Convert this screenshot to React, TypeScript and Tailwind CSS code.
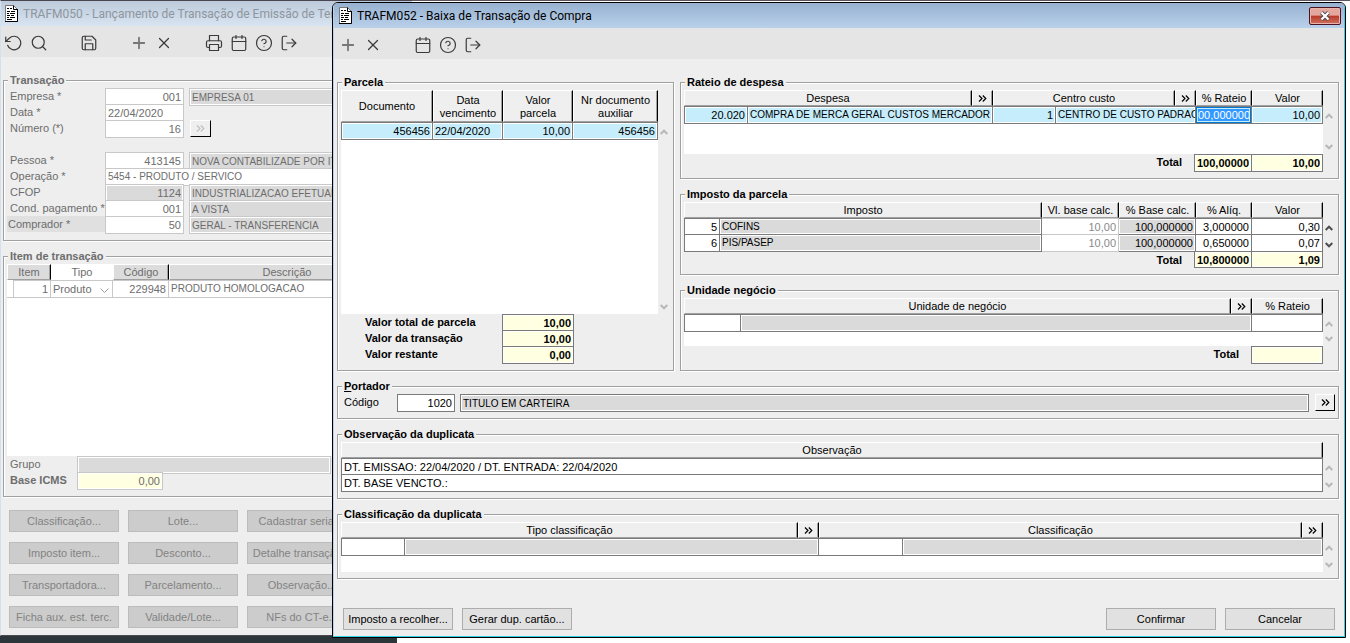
import type { ReactNode } from 'react'
import clsx from 'clsx'
import type { IconType } from 'react-icons'
import {
  FiCalendar,
  FiHelpCircle,
  FiLogOut,
  FiPlus,
  FiPrinter,
  FiRotateCcw,
  FiSave,
  FiSearch,
  FiX,
} from 'react-icons/fi'

type Tool = { label: string; icon: IconType; muted?: boolean } | null

// null leaves an empty slot between groups
const backTools: Tool[] = [
  { label: 'Desfazer', icon: FiRotateCcw },
  { label: 'Pesquisar', icon: FiSearch },
  null,
  { label: 'Salvar', icon: FiSave },
  null,
  { label: 'Incluir', icon: FiPlus, muted: true },
  { label: 'Excluir', icon: FiX },
  null,
  { label: 'Imprimir', icon: FiPrinter },
  { label: 'Calendário', icon: FiCalendar },
  { label: 'Ajuda', icon: FiHelpCircle },
  { label: 'Sair', icon: FiLogOut },
]

const frontTools: Tool[] = [
  { label: 'Incluir', icon: FiPlus, muted: true },
  { label: 'Excluir', icon: FiX },
  null,
  { label: 'Calendário', icon: FiCalendar },
  { label: 'Ajuda', icon: FiHelpCircle },
  { label: 'Sair', icon: FiLogOut },
]

const backActions = [
  'Classificação...',
  'Lote...',
  'Cadastrar serial...',
  'Imposto item...',
  'Desconto...',
  'Detalhe transação...',
  'Transportadora...',
  'Parcelamento...',
  'Observação...',
  'Ficha aux. est. terc.',
  'Validade/Lote...',
  'NFs do CT-e...',
]

const impostos = [
  { id: '5', nome: 'COFINS', base: '10,00', perc: '100,000000', aliq: '3,000000', valor: '0,30' },
  { id: '6', nome: 'PIS/PASEP', base: '10,00', perc: '100,000000', aliq: '0,650000', valor: '0,07' },
]

function DocIcon() {
  return (
    <svg width="13" height="17" viewBox="0 0 13 17" className="shrink-0">
      <path d="M.5.5h8l4 4v12H.5z" fill="#fff" stroke="#777" />
      <path d="M8.5.5v4h4M12.5 4v12.5H0" fill="none" stroke="#000" />
      <path
        d="M2 3.5h2M5 3.5h2M2 6.5h3M6 6.5h4M2 8.5h2M5 8.5h5M2 10.5h3M6 10.5h3M2 12.5h2M5 12.5h5M2 14.5h5"
        stroke="#000"
        strokeWidth="1"
      />
    </svg>
  )
}

function DoubleArrow() {
  return (
    <svg width="9" height="7" viewBox="0 0 9 7" fill="none" stroke="currentColor" strokeWidth="1.2">
      <path d="M1 .5l3 3-3 3M4.8 .5l3 3-3 3" />
    </svg>
  )
}

function LovButton({ label }: { label: string }) {
  return (
    <button type="button" aria-label={label} className="flex w-full items-center justify-center">
      <DoubleArrow />
    </button>
  )
}

function TitleBar({ title, active }: { title: string; active?: boolean }) {
  return (
    <div
      className={clsx(
        'flex h-[25px] items-center gap-[5px] pr-[3px] font-[Roboto,sans-serif] text-[12px] leading-4',
        active
          ? 'bg-linear-to-b from-[#97b1d0] to-[#b9d1ea] pl-[5px] text-black'
          : 'bg-linear-to-b from-[#bccadb] to-[#d8e4f1] pl-1 text-[#8e959d]',
      )}
    >
      <DocIcon />
      <h1 className="flex-1 overflow-hidden whitespace-nowrap">{title}</h1>
      {active ? (
        <button
          type="button"
          aria-label="Fechar"
          className="flex h-[18px] w-8 items-center justify-center rounded-xs border border-[#4c1420] bg-linear-to-b from-[#e4a79d] from-45% via-[#b8392a] via-50% to-[#d0705c] shadow-[inset_0_0_0_1px_#e8b3aa]"
        >
          <svg width="12" height="10" viewBox="0 0 12 10">
            <path d="M2.5 1.5l7 7M9.5 1.5l-7 7" stroke="#4a4a55" strokeWidth="4" />
            <path d="M2.5 1.5l7 7M9.5 1.5l-7 7" stroke="#fff" strokeWidth="2.2" />
          </svg>
        </button>
      ) : null}
    </div>
  )
}

function Toolbar({ tools, className }: { tools: Tool[]; className?: string }) {
  return (
    <div className={clsx('flex h-[31px] items-center bg-[#e5e5e5] pt-0.5', className)}>
      {tools.map((t, i) =>
        t ? (
          <button
            key={t.label}
            type="button"
            aria-label={t.label}
            className={clsx(
              'flex w-[25px] justify-center',
              t.muted ? 'text-[#777777]' : 'text-[#3a3a3a]',
            )}
          >
            <t.icon size={18} strokeWidth={t.muted ? 2.4 : 1.6} />
          </button>
        ) : (
          <span key={i} className="w-[25px]" />
        ),
      )}
    </div>
  )
}

function Group({
  title,
  className,
  children,
}: {
  title: ReactNode
  className?: string
  children: ReactNode
}) {
  return (
    <fieldset
      className={clsx(
        'min-w-0 border border-[#a0a0a0] px-[3px] pb-1.5 shadow-[inset_1px_1px_0_#fff,1px_1px_0_#fff]',
        className,
      )}
    >
      <legend className="ml-px bg-[#eeeeee] px-0.5 font-bold leading-4">{title}</legend>
      {children}
    </fieldset>
  )
}

function Th({
  span,
  className,
  children,
}: {
  span?: number
  className?: string
  children?: ReactNode
}) {
  return (
    <th
      colSpan={span}
      className={clsx(
        'overflow-hidden border border-t-white border-r-black border-b-[#a0a0a0] border-l-white p-0 pt-px leading-[13px] font-normal whitespace-nowrap',
        className ?? 'bg-[#efefef] shadow-[inset_-1px_0_0_#a0a0a0]',
      )}
    >
      {children}
    </th>
  )
}

function Td({
  span,
  className,
  children,
}: {
  span?: number
  className?: string
  children?: ReactNode
}) {
  return (
    <td
      colSpan={span}
      className={clsx(
        'overflow-hidden border-t border-r p-0 px-0.5 leading-[14px] whitespace-nowrap',
        className,
      )}
    >
      {children}
    </td>
  )
}

const rowClass = 'h-4 *:border-[#7a7a7a] *:first:border-l last:h-[18px] last:*:border-b'
const selectedCell = 'bg-[#c6edfc] shadow-[inset_0_0_0_1px_#fff]'
const grayCell = 'bg-[#dadada] shadow-[inset_0_0_0_1px_#fff]'
const cellInput = 'block h-[14px] w-full bg-transparent outline-none'

function Scroller({ tall, active }: { tall?: boolean; active?: boolean }) {
  const color = active ? 'text-[#505050]' : 'text-[#b8b8b8]'
  const button = 'flex h-[15px] w-3 items-center justify-center'
  return (
    <div
      className={clsx(
        'flex w-3 shrink-0 flex-col justify-between',
        tall ? 'pt-[34px]' : 'pt-[18px]',
        color,
      )}
    >
      <button type="button" aria-label="Rolar para cima" className={button}>
        <svg width="8" height="6" viewBox="0 0 8 6" fill="none" stroke="currentColor" strokeWidth="2">
          <path d="M.7 5L4 1.7 7.3 5" />
        </svg>
      </button>
      <button type="button" aria-label="Rolar para baixo" className={button}>
        <svg width="8" height="6" viewBox="0 0 8 6" fill="none" stroke="currentColor" strokeWidth="2">
          <path d="M.7 1L4 4.3 7.3 1" />
        </svg>
      </button>
    </div>
  )
}

function Grid({
  height,
  cols,
  head,
  tall,
  scrollActive,
  noScroll,
  children,
}: {
  height: string
  cols: string[]
  head: ReactNode
  tall?: boolean
  scrollActive?: boolean
  noScroll?: boolean
  children: ReactNode
}) {
  return (
    <div className={clsx('flex', height)}>
      <div className="min-w-0 flex-1 bg-white">
        <table className="w-full table-fixed border-separate border-spacing-0">
          <colgroup>
            {cols.map((c, i) => (
              <col key={i} className={c} />
            ))}
          </colgroup>
          <thead>
            <tr className={tall ? 'h-8' : 'h-4'}>{head}</tr>
          </thead>
          <tbody>{children}</tbody>
        </table>
      </div>
      {noScroll ? null : <Scroller tall={tall} active={scrollActive} />}
    </div>
  )
}

const totalInput =
  'border border-[#7a7a7a] bg-[#ffffe1] px-0.5 font-bold shadow-[inset_0_0_0_1px_#fff] outline-none'

// label, code box and optional description of the background form
function FieldRow({
  id,
  label,
  code,
  desc,
  align = 'text-right',
  disabled,
  highlight,
  extra,
}: {
  id: string
  label: string
  code: string
  desc?: string
  align?: string
  disabled?: boolean
  highlight?: boolean
  extra?: ReactNode
}) {
  return (
    <div className="flex h-4">
      <label
        htmlFor={id}
        className={clsx('w-[98px] shrink-0 leading-4', highlight ? 'bg-[#e0e0e0] pl-px' : 'pl-[3px]')}
      >
        {label}
      </label>
      <input
        id={id}
        defaultValue={code}
        disabled={disabled}
        className={clsx(
          'h-[18px] w-[79px] shrink-0 border border-[#c8c8c8] px-0.5',
          disabled ? grayCell : 'bg-white',
          align,
        )}
      />
      {desc ? (
        <input
          aria-label={`${label} descrição`}
          readOnly
          defaultValue={desc}
          className={clsx(
            'ml-[5px] h-[18px] min-w-0 flex-1 border border-[#c8c8c8] px-0.5 text-[10px]',
            grayCell,
          )}
        />
      ) : null}
      {extra}
    </div>
  )
}

function TransactionWindow() {
  const head = 'bg-[#dcdcdc] shadow-[inset_-1px_0_0_#a0a0a0]'
  return (
    <section className="absolute top-0 left-0 w-[412px] border-t border-b border-l border-t-[#4a4650] border-b-[#4a4a50] border-l-[#d3e0ef] bg-[#eeeeee] text-[#6d6d6d]">
      <TitleBar title="TRAFM050 - Lançamento de Transação de Emissão de Terceiros" />
      <Toolbar tools={backTools} />
      <div className="flex flex-col gap-[7px] pt-[15px] pr-[3px] pl-0.5">
        <Group title="Transação">
          <div className="pb-0.5">
            <FieldRow id="empresa" label="Empresa *" code="001" desc="EMPRESA 01" />
            <FieldRow id="data" label="Data *" code="22/04/2020" align="text-left" />
            <FieldRow
              id="numero"
              label="Número (*)"
              code="16"
              extra={
                <button
                  type="button"
                  disabled
                  aria-label="Buscar número"
                  className="ml-1.5 flex h-[17px] w-[21px] items-center justify-center border border-t-white border-r-black border-b-black border-l-white bg-[#efefef] text-[#c0c0c0]"
                >
                  <DoubleArrow />
                </button>
              }
            />
            <div className="h-4" />
            <FieldRow
              id="pessoa"
              label="Pessoa *"
              code="413145"
              desc="NOVA CONTABILIZADE POR ITEM"
            />
            <div className="flex h-4">
              <label htmlFor="operacao" className="w-[98px] shrink-0 pl-[3px] leading-4">
                Operação *
              </label>
              <select
                id="operacao"
                className="h-[18px] min-w-0 flex-1 appearance-none border border-[#c8c8c8] bg-white px-0.5 text-[10px]"
              >
                <option>5454 - PRODUTO / SERVICO</option>
              </select>
            </div>
            <FieldRow id="cfop" label="CFOP" code="1124" desc="INDUSTRIALIZACAO EFETUADA" disabled />
            <FieldRow id="cond" label="Cond. pagamento *" code="001" desc="A VISTA" />
            <FieldRow
              id="comprador"
              label="Comprador *"
              code="50"
              desc="GERAL - TRANSFERENCIA"
              highlight
            />
          </div>
        </Group>

        <Group title="Item de transação">
          <Grid
            height="h-48"
            noScroll
            cols={['w-[7px]', 'w-[37px]', 'w-[62px]', 'w-14', '']}
            head={
              <>
                <Th span={2} className={head}>
                  Item
                </Th>
                <Th className="border-white! bg-white">Tipo</Th>
                <Th className={head}>Código</Th>
                <Th className={head}>Descrição</Th>
              </>
            }
          >
            <tr className="h-[18px] *:border-b *:border-[#c8c8c8]">
              <td className="border-r p-0" />
              <Td className="text-right">1</Td>
              <Td>
                <div className="relative">
                  <select
                    aria-label="Tipo"
                    className="block h-[14px] w-full appearance-none bg-transparent leading-[14px]"
                  >
                    <option>Produto</option>
                  </select>
                  <svg
                    width="9"
                    height="5"
                    viewBox="0 0 9 5"
                    fill="none"
                    stroke="#a0a0a0"
                    className="pointer-events-none absolute top-1.5 right-px"
                  >
                    <path d="M.5.5l4 4 4-4" />
                  </svg>
                </div>
              </Td>
              <Td className="text-right">229948</Td>
              <Td className="text-[10px]">PRODUTO HOMOLOGACAO</Td>
            </tr>
          </Grid>
          <div className="pb-0.5">
            <div className="flex h-4">
              <label htmlFor="grupo" className="w-[70px] pl-[3px] leading-4">
                Grupo
              </label>
              <input
                id="grupo"
                disabled
                className={clsx('h-[18px] w-[254px] border border-[#c8c8c8]', grayCell)}
              />
            </div>
            <div className="flex h-4">
              <label htmlFor="icms" className="w-[70px] pl-[3px] leading-4 font-bold">
                Base ICMS
              </label>
              <input
                id="icms"
                readOnly
                defaultValue="0,00"
                className="h-[18px] w-[86px] border border-[#c8c8c8] bg-[#ffffe1] px-0.5 text-right shadow-[inset_0_0_0_1px_#fff]"
              />
            </div>
          </div>
        </Group>
      </div>

      <div className="grid grid-cols-[repeat(3,110px)] gap-x-[9px] gap-y-2.5 pt-[13px] pb-[7px] pl-2">
        {backActions.map((label) => (
          <button
            key={label}
            type="button"
            disabled
            className="h-[22px] border border-[#bcbcbc] bg-[#cccccc] whitespace-nowrap text-[#838383]"
          >
            {label}
          </button>
        ))}
      </div>
    </section>
  )
}

function ParcelaGroup() {
  const totals = [
    { id: 'total-parcela', label: 'Valor total de parcela', value: '10,00' },
    { id: 'total-transacao', label: 'Valor da transação', value: '10,00' },
    { id: 'restante', label: 'Valor restante', value: '0,00' },
  ]
  return (
    <Group title="Parcela" className="w-[337px] shrink-0">
      <Grid
        height="h-56"
        tall
        cols={['', 'w-[70px]', 'w-[70px]', 'w-[85px]']}
        head={
          <>
            <Th>Documento</Th>
            <Th>
              Data
              <br />
              vencimento
            </Th>
            <Th>
              Valor
              <br />
              parcela
            </Th>
            <Th>
              Nr documento
              <br />
              auxiliar
            </Th>
          </>
        }
      >
        <tr className={rowClass}>
          <Td className={clsx(selectedCell, 'text-right')}>456456</Td>
          <Td className={selectedCell}>22/04/2020</Td>
          <Td className={clsx(selectedCell, 'text-right')}>10,00</Td>
          <Td className={clsx(selectedCell, 'text-right')}>456456</Td>
        </tr>
      </Grid>
      <div className="pb-0.5 pl-6">
        {totals.map((t) => (
          <div key={t.id} className="flex h-4">
            <label htmlFor={t.id} className="w-[137px] leading-4 font-bold">
              {t.label}
            </label>
            <input
              id={t.id}
              readOnly
              defaultValue={t.value}
              className={clsx(totalInput, 'h-[18px] w-[72px] text-right')}
            />
          </div>
        ))}
      </div>
    </Group>
  )
}

function RateioGroup() {
  return (
    <Group title="Rateio de despesa">
      <Grid
        height="h-16"
        cols={['w-16', '', 'w-[21px]', 'w-[63px]', 'w-[119px]', 'w-[21px]', 'w-14', 'w-[71px]']}
        head={
          <>
            <Th span={2}>Despesa</Th>
            <Th>
              <LovButton label="Lista de despesas" />
            </Th>
            <Th span={2}>Centro custo</Th>
            <Th>
              <LovButton label="Lista de centros de custo" />
            </Th>
            <Th>% Rateio</Th>
            <Th>Valor</Th>
          </>
        }
      >
        <tr className={rowClass}>
          <Td className={clsx(selectedCell, 'text-right')}>20.020</Td>
          <Td span={2} className={clsx(selectedCell, 'text-[10px]')}>
            COMPRA DE MERCA GERAL CUSTOS MERCADOR
          </Td>
          <Td className={clsx(selectedCell, 'text-right')}>1</Td>
          <Td span={2} className={clsx(selectedCell, 'text-[10px]')}>
            CENTRO DE CUSTO PADRAO
          </Td>
          <Td className="bg-[#3399ff] text-white shadow-[inset_0_0_0_1px_#0078d7,inset_0_0_0_2px_#c6edfc]">
            <input
              aria-label="% Rateio"
              defaultValue="00,000000"
              className={clsx(cellInput, 'text-right')}
            />
          </Td>
          <Td className={clsx(selectedCell, 'text-right')}>10,00</Td>
        </tr>
      </Grid>
      <div className="flex justify-end pr-3">
        <span className="mr-3 leading-4 font-bold">Total</span>
        <input
          aria-label="Total % rateio"
          readOnly
          defaultValue="100,000000"
          className={clsx(totalInput, 'h-[18px] w-[57px] border-r-0')}
        />
        <input
          aria-label="Total valor"
          readOnly
          defaultValue="10,00"
          className={clsx(totalInput, 'h-[18px] w-[72px] text-right')}
        />
      </div>
    </Group>
  )
}

function ImpostoGroup() {
  return (
    <Group title="Imposto da parcela">
      <Grid
        height="h-[50px]"
        scrollActive
        cols={['w-9', '', 'w-[77px]', 'w-[77px]', 'w-14', 'w-[71px]']}
        head={
          <>
            <Th span={2}>Imposto</Th>
            <Th>Vl. base calc.</Th>
            <Th>% Base calc.</Th>
            <Th>% Alíq.</Th>
            <Th>Valor</Th>
          </>
        }
      >
        {impostos.map((r) => (
          <tr key={r.id} className={rowClass}>
            <Td className="text-right">{r.id}</Td>
            <Td className={clsx(grayCell, 'text-[10px]')}>{r.nome}</Td>
            <Td className="border-[#c8c8c8]! text-right text-[#8a8a8a]">{r.base}</Td>
            <Td className={clsx(grayCell, 'text-right')}>{r.perc}</Td>
            <Td className="text-right">{r.aliq}</Td>
            <Td className="text-right">{r.valor}</Td>
          </tr>
        ))}
      </Grid>
      <div className="flex justify-end pr-3">
        <span className="mr-3 leading-4 font-bold">Total</span>
        <input
          aria-label="Total alíquota"
          readOnly
          defaultValue="10,800000"
          className={clsx(totalInput, 'h-4 w-[57px] border-t-0 border-r-0 text-right')}
        />
        <input
          aria-label="Total imposto"
          readOnly
          defaultValue="1,09"
          className={clsx(totalInput, 'h-4 w-[72px] border-t-0 text-right')}
        />
      </div>
    </Group>
  )
}

function UnidadeGroup() {
  return (
    <Group title="Unidade negócio">
      <Grid
        height="h-12"
        cols={['w-[57px]', '', 'w-[21px]', 'w-[71px]']}
        head={
          <>
            <Th span={2}>Unidade de negócio</Th>
            <Th>
              <LovButton label="Lista de unidades" />
            </Th>
            <Th>% Rateio</Th>
          </>
        }
      >
        <tr className={rowClass}>
          <Td>
            <input aria-label="Código da unidade" className={cellInput} />
          </Td>
          <Td span={2} className={grayCell} />
          <Td>
            <input aria-label="% Rateio da unidade" className={cellInput} />
          </Td>
        </tr>
      </Grid>
      <div className="flex justify-end pr-3">
        <label htmlFor="total-unidade" className="mr-3 leading-4 font-bold">
          Total
        </label>
        <input id="total-unidade" readOnly className={clsx(totalInput, 'h-[18px] w-[72px]')} />
      </div>
    </Group>
  )
}

function PaymentWindow() {
  const button = 'h-[22px] w-[110px] border border-[#adadad] bg-[#e1e1e1] whitespace-nowrap'
  return (
    <section className="relative mt-0.5 mr-1 ml-[332px] overflow-hidden rounded-t-md border border-black bg-[#eeeeee] text-black">
      <div className="border-r border-b border-l border-r-[#2fd0e8] border-b-[#2fd0e8] border-l-[#b9d1ea]">
        <TitleBar title="TRAFM052 - Baixa de Transação de Compra" active />
        <Toolbar tools={frontTools} className="pl-px" />

        <div className="flex flex-col gap-[7px] pt-[15px] pr-[5px] pl-[3px]">
          <div className="flex gap-1.5">
            <ParcelaGroup />
            <div className="flex min-w-0 flex-1 flex-col gap-[7px]">
              <RateioGroup />
              <ImpostoGroup />
              <UnidadeGroup />
            </div>
          </div>

          <Group
            title={
              <>
                <u>P</u>ortador
              </>
            }
          >
            <div className="flex">
              <label htmlFor="portador" className="w-14 pl-[3px] leading-4">
                Código
              </label>
              <input
                id="portador"
                defaultValue="1020"
                className="h-[18px] w-[58px] border border-[#7a7a7a] bg-white px-0.5 text-right"
              />
              <input
                aria-label="Descrição do portador"
                readOnly
                defaultValue="TITULO EM CARTEIRA"
                className={clsx(
                  'mr-1.5 ml-[5px] h-[18px] min-w-0 flex-1 border border-[#7a7a7a] px-0.5 text-[10px]',
                  grayCell,
                )}
              />
              <button
                type="button"
                aria-label="Lista de portadores"
                className="flex h-[17px] w-5 items-center justify-center border border-t-white border-r-black border-b-black border-l-white bg-[#efefef]"
              >
                <DoubleArrow />
              </button>
            </div>
          </Group>

          <Group title="Observação da duplicata">
            <Grid height="h-[50px]" cols={['']} head={<Th>Observação</Th>}>
              <tr className={rowClass}>
                <Td>DT. EMISSAO: 22/04/2020 / DT. ENTRADA: 22/04/2020</Td>
              </tr>
              <tr className={rowClass}>
                <Td>DT. BASE VENCTO.:</Td>
              </tr>
            </Grid>
          </Group>

          <Group title="Classificação da duplicata">
            <Grid
              height="h-[50px]"
              cols={['w-16', 'w-[40%]', 'w-[21px]', 'w-[84px]', '', 'w-[21px]']}
              head={
                <>
                  <Th span={2}>Tipo classificação</Th>
                  <Th>
                    <LovButton label="Lista de tipos" />
                  </Th>
                  <Th span={2}>Classificação</Th>
                  <Th>
                    <LovButton label="Lista de classificações" />
                  </Th>
                </>
              }
            >
              <tr className={rowClass}>
                <Td>
                  <input aria-label="Código do tipo" className={cellInput} />
                </Td>
                <Td span={2} className={grayCell} />
                <Td>
                  <input aria-label="Código da classificação" className={cellInput} />
                </Td>
                <Td span={2} className={grayCell} />
              </tr>
            </Grid>
          </Group>
        </div>

        <div className="flex gap-[9px] px-[9px] pt-[29px] pb-1.5">
          <button type="button" className={button}>
            Imposto a recolher...
          </button>
          <button type="button" className={clsx(button, 'mr-auto')}>
            Gerar dup. cartão...
          </button>
          <button type="button" className={button}>
            Confirmar
          </button>
          <button type="button" className={button}>
            Cancelar
          </button>
        </div>
      </div>
    </section>
  )
}

export default function App() {
  return (
    <main className="relative flow-root min-h-screen overflow-hidden bg-white font-['Liberation_Sans',Arial,sans-serif] text-[11px] leading-[14px]">
      <div className="absolute top-0 right-0 left-0 h-px bg-[#5a5560]" />
      <div className="absolute bottom-0 left-0 h-16 w-[397px] bg-[#2c3539]" />
      <TransactionWindow />
      <PaymentWindow />
    </main>
  )
}
